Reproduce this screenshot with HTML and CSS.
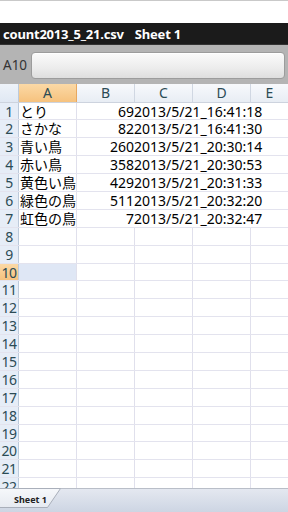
FILE: index.html
```html
<!DOCTYPE html>
<html>
<head>
<meta charset="utf-8">
<link rel="stylesheet" href="styles.css">
</head>
<body>
<div class="screen">
  <div class="status"></div>
  <div class="titlebar"><span class="fname">count2013_5_21.csv</span><span class="sheet">Sheet 1</span></div>
  <div class="formulabar">
    <span class="cellref">A10</span>
    <div class="input"></div>
  </div>
  <div class="grid">
    <div class="row head"><div class="c rn corner"></div><div class="c a sel">A</div><div class="c b">B</div><div class="c cc">C</div><div class="c d">D</div><div class="c e">E</div></div>
    <div class="row data"><div class="c rn">1</div><div class="c a jp">とり</div><div class="c b num">69</div><div class="c cc txt">2013/5/21_16:41:18</div><div class="c d"></div><div class="c e"></div></div>
    <div class="row data"><div class="c rn">2</div><div class="c a jp">さかな</div><div class="c b num">82</div><div class="c cc txt">2013/5/21_16:41:30</div><div class="c d"></div><div class="c e"></div></div>
    <div class="row data"><div class="c rn">3</div><div class="c a jp">青い鳥</div><div class="c b num">260</div><div class="c cc txt">2013/5/21_20:30:14</div><div class="c d"></div><div class="c e"></div></div>
    <div class="row data"><div class="c rn">4</div><div class="c a jp">赤い鳥</div><div class="c b num">358</div><div class="c cc txt">2013/5/21_20:30:53</div><div class="c d"></div><div class="c e"></div></div>
    <div class="row data"><div class="c rn">5</div><div class="c a jp">黄色い鳥</div><div class="c b num">429</div><div class="c cc txt">2013/5/21_20:31:33</div><div class="c d"></div><div class="c e"></div></div>
    <div class="row data"><div class="c rn">6</div><div class="c a jp">緑色の鳥</div><div class="c b num">511</div><div class="c cc txt">2013/5/21_20:32:20</div><div class="c d"></div><div class="c e"></div></div>
    <div class="row data"><div class="c rn">7</div><div class="c a jp">虹色の鳥</div><div class="c b num">7</div><div class="c cc txt">2013/5/21_20:32:47</div><div class="c d"></div><div class="c e"></div></div>
    <div class="row"><div class="c rn">8</div><div class="c a"></div><div class="c b"></div><div class="c cc"></div><div class="c d"></div><div class="c e"></div></div>
    <div class="row"><div class="c rn">9</div><div class="c a"></div><div class="c b"></div><div class="c cc"></div><div class="c d"></div><div class="c e"></div></div>
    <div class="row active"><div class="c rn sel">10</div><div class="c a cur"></div><div class="c b"></div><div class="c cc"></div><div class="c d"></div><div class="c e"></div></div>
    <div class="row"><div class="c rn">11</div><div class="c a"></div><div class="c b"></div><div class="c cc"></div><div class="c d"></div><div class="c e"></div></div>
    <div class="row"><div class="c rn">12</div><div class="c a"></div><div class="c b"></div><div class="c cc"></div><div class="c d"></div><div class="c e"></div></div>
    <div class="row"><div class="c rn">13</div><div class="c a"></div><div class="c b"></div><div class="c cc"></div><div class="c d"></div><div class="c e"></div></div>
    <div class="row"><div class="c rn">14</div><div class="c a"></div><div class="c b"></div><div class="c cc"></div><div class="c d"></div><div class="c e"></div></div>
    <div class="row"><div class="c rn">15</div><div class="c a"></div><div class="c b"></div><div class="c cc"></div><div class="c d"></div><div class="c e"></div></div>
    <div class="row"><div class="c rn">16</div><div class="c a"></div><div class="c b"></div><div class="c cc"></div><div class="c d"></div><div class="c e"></div></div>
    <div class="row"><div class="c rn">17</div><div class="c a"></div><div class="c b"></div><div class="c cc"></div><div class="c d"></div><div class="c e"></div></div>
    <div class="row"><div class="c rn">18</div><div class="c a"></div><div class="c b"></div><div class="c cc"></div><div class="c d"></div><div class="c e"></div></div>
    <div class="row"><div class="c rn">19</div><div class="c a"></div><div class="c b"></div><div class="c cc"></div><div class="c d"></div><div class="c e"></div></div>
    <div class="row"><div class="c rn">20</div><div class="c a"></div><div class="c b"></div><div class="c cc"></div><div class="c d"></div><div class="c e"></div></div>
    <div class="row"><div class="c rn">21</div><div class="c a"></div><div class="c b"></div><div class="c cc"></div><div class="c d"></div><div class="c e"></div></div>
    <div class="row"><div class="c rn">22</div><div class="c a"></div><div class="c b"></div><div class="c cc"></div><div class="c d"></div><div class="c e"></div></div>
  </div>
  <div class="tabbar">
    <div class="tab">
      <svg class="tabshape" width="62" height="24" viewBox="0 0 62 24"><defs><linearGradient id="tg" x1="0" y1="0" x2="0" y2="1"><stop offset="0" stop-color="#f6f8fb"/><stop offset="1" stop-color="#e6eaf1"/></linearGradient></defs><path d="M0 0.5 H60.5 L47.5 19.5 H0" fill="url(#tg)" stroke="#a9afba" stroke-width="1"/></svg>
      <span class="tablabel">Sheet 1</span>
    </div>
  </div>
</div>
</body>
</html>
```
FILE: styles.css
```css
* { box-sizing: border-box; }
html, body { margin: 0; padding: 0; }
body { background: #fff; font-family: "Noto Sans", "Noto Sans CJK JP", sans-serif; }
.screen { width: 288px; height: 512px; overflow: hidden; display: flex; flex-direction: column; }
.status { height: 23px; flex: none; background: #fff; border-top: 1px solid #c9c9c9; }
.titlebar { height: 22px; flex: none; background: #1b1b1b; color: #fff; font-weight: bold; font-size: 13px; line-height: 22px; padding-left: 3px; display: flex; white-space: nowrap; border-bottom: 1px solid #333; letter-spacing: -0.2px; }
.titlebar .sheet { margin-left: 11px; }
.formulabar { height: 39px; flex: none; background: #b4b4b4; display: flex; align-items: center; padding: 0 3px 0 3px; gap: 5px; }
.cellref { width: 23px; font-size: 13.5px; color: #333; }
.input { flex: 1; height: 27px; margin-top: 1px; border-radius: 4px; border: 1px solid #9c9c9c; background: linear-gradient(#fbfbfb, #ececec 60%, #dedede); box-shadow: inset 0 1px 0 #fff; }
.grid { flex: 1; overflow: hidden; background: #fff; }
.row { display: flex; height: 17.9px; border-bottom: 1px solid #e3e3ee; }
.row.head { height: 18.5px; border-bottom: 1px solid #cdd3de; }
.c { flex: none; height: 100%; border-right: 1px solid #e0e0ec; font-size: 14px; line-height: 17px; white-space: nowrap; color: #000; }
.rn { width: 19px; background: #e6edf7; border-right: 1px solid #bccadb; color: #2b4b55; text-align: center; font-size: 14px; letter-spacing: -0.5px; }
.a, .b, .cc, .d { width: 58px; }
.e { width: 38px; border-right: none; }
.head .c { background: linear-gradient(#f7f9fc, #e8edf4); color: #2b4b55; text-align: center; font-size: 14px; line-height: 18px; border-right: 1px solid #d0d7e2; }
.head .corner { background: linear-gradient(#eef3f9, #e0e8f3); border-right: 1px solid #bccadb; }
.head .c.sel { background: linear-gradient(#fbd9a6, #f6c27e); border-right: 1px solid #e7a860; }
.rn.sel { background: linear-gradient(#fbd9a6, #f6c27e); }
.cur { background: #dfe7f5; }
.jp { font-size: 14px; padding-left: 1px; }
.num { text-align: right; padding-right: 0; }
.txt { margin-left: -1px; }
.data .b, .data .cc, .data .d { border-right-color: transparent; }
.tabbar { height: 24px; flex: none; position: relative; background: linear-gradient(#e4e8f0, #cdd5e3); border-top: 1px solid #b9bec8; }
.tab { position: absolute; left: 0; top: -1px; width: 62px; height: 24px; }
.tabshape { position: absolute; left: 0; top: 0; }
.tablabel { position: absolute; left: 14px; top: 5px; font-size: 9px; font-weight: bold; color: #222; }
```
